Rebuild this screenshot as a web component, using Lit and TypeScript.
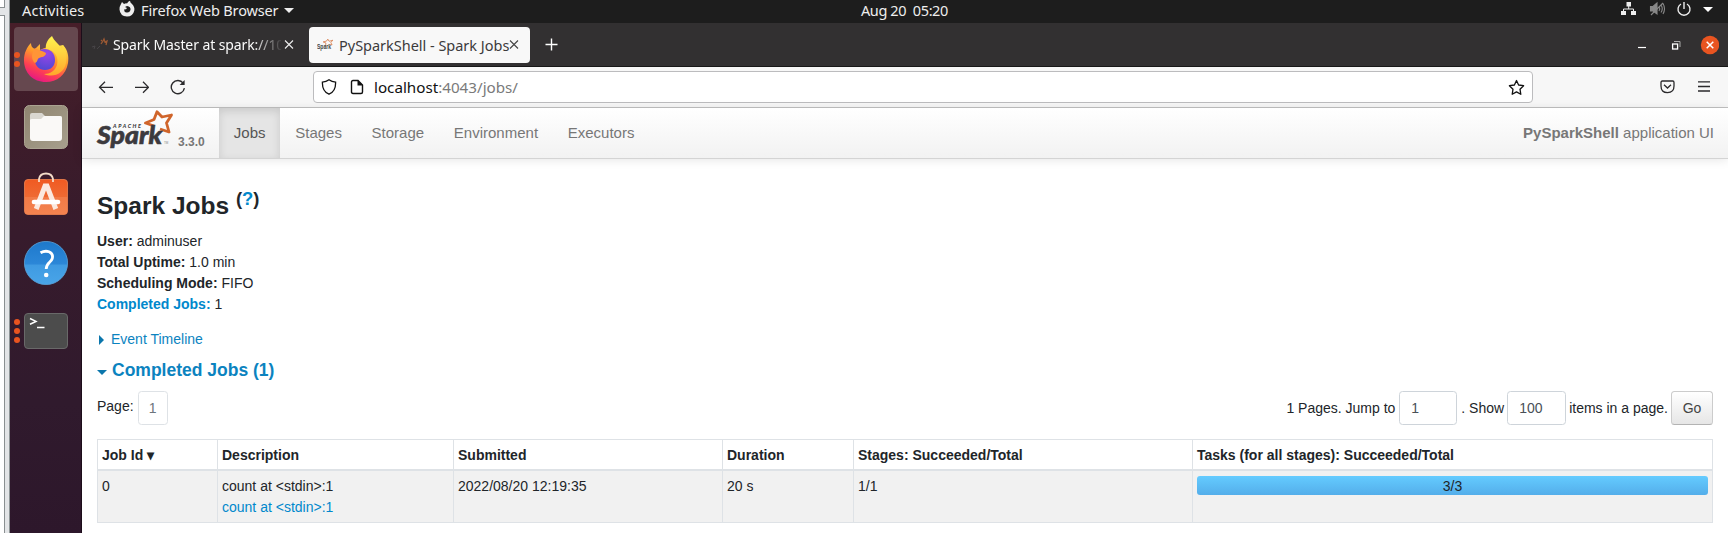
import { LitElement, html, css, svg } from "lit";
import { customElement } from "lit/decorators.js";

const star = svg`<path d="M40 34 L42 19 L29 14 L45 10 L51 1 L57 11 L74 6 L65 17 L71 28 L58 26" fill="none" stroke="#d0652b" stroke-width="3.2" stroke-linejoin="round"/>`;

@customElement("desktop-dock")
export class DesktopDock extends LitElement {
  static styles = css`
    :host { display: flex; flex-direction: column; align-items: center; gap: 3px; width: 72px; box-sizing: border-box; padding-top: 4px; flex: none; background: linear-gradient(#471e29 0, #3d1c2a 110px, #371b2c 210px, #301a2d 380px, #2d172b); border-right: 1px solid #1c0d1a; }
    .slot { display: flex; align-items: center; justify-content: center; width: 64px; height: 64px; border-radius: 4px; margin-bottom: 1px; position: relative; }
    .on { background: #66484f; }
    svg { display: block; }
    .dots { position: absolute; left: 0; top: 0; height: 64px; display: flex; flex-direction: column; justify-content: center; gap: 3px; }
    .dots i { width: 6px; height: 6px; border-radius: 50%; background: #e95420; }
  `;
  render() {
    return html`
      <div class="slot on"><div class="dots"><i></i><i></i></div>
        <svg width="46" height="48" viewBox="0 0 46 48">
          <defs>
            <linearGradient id="f" x1=".8" y1="0" x2=".3" y2="1"><stop offset="0" stop-color="#ffe14a"/><stop offset=".4" stop-color="#ff9a2b"/><stop offset=".72" stop-color="#ff4052"/><stop offset="1" stop-color="#e31587"/></linearGradient>
            <radialGradient id="g" cx=".6" cy=".2" r=".9"><stop offset="0" stop-color="#9a45e8"/><stop offset="1" stop-color="#4b48d0"/></radialGradient>
            <linearGradient id="y" x1="0" y1="0" x2="0" y2="1"><stop offset="0" stop-color="#fff44f"/><stop offset="1" stop-color="#ffa72b"/></linearGradient>
          </defs>
          <path d="M8 8 C8 11 9 13 12 14 L17 9 L17 15 C26 10 34 12 40 10 C45 15 46 22 45 28 C43 40 34 47 23 47 C10 47 1 38 1 25 C1 18 4 12 8 8Z" fill="url(#f)"/>
          <path d="M29 1 C25 4 22 9 23 14 C32 15 36 22 34 30 C32 36 27 39 21 39 C30 43 41 39 43 28 C44 22 44 16 40 10 L39 14 C36 9 31 6 29 1Z" fill="url(#y)"/>
          <path d="M17 15 C24 12 32 16 32 25 C32 31 28 35 22 35 C16 35 13 31 12 27Z" fill="url(#g)"/>
          <path d="M12 13 C15 15 18 15 23 18 C23 22 18 22 16 23 C14 24 15 27 12 28 C8 25 8 18 12 13Z" fill="#ff9537"/>
        </svg></div>
      <div class="slot"><svg width="44" height="44" viewBox="0 0 44 44">
        <defs><linearGradient id="fl" x1="0" y1="0" x2="1" y2="1"><stop offset="0" stop-color="#8f8570"/><stop offset="1" stop-color="#a79f8d"/></linearGradient></defs>
        <rect x=".5" y=".5" width="43" height="43" rx="5" fill="url(#fl)" stroke="#aaa391"/>
        <path d="M6 10 Q6 8 8 8 H18 L21 11 H36 Q38 11 38 13 V20 H6Z" fill="#d9d7d0"/>
        <path d="M6 15 Q6 14 8 14 H17 L20 11 H36 Q38 11 38 13 V33 Q38 36 35 36 H9 Q6 36 6 33Z" fill="#faf9f7"/>
      </svg></div>
      <div class="slot"><svg width="44" height="44" viewBox="0 6 44 44" overflow="visible">
        <defs><linearGradient id="sw" x1="0" y1="0" x2="0" y2="1"><stop offset="0" stop-color="#f05a22"/><stop offset=".5" stop-color="#ef6a33"/><stop offset=".51" stop-color="#f27a46"/><stop offset="1" stop-color="#f38350"/></linearGradient></defs>
        <rect x=".5" y="12.5" width="43" height="35" rx="3.5" fill="url(#sw)" stroke="#f0834f" stroke-width=".8"/>
        <path d="M15 15 V12 Q16 6.5 22 6.5 Q28 6.5 29 12 V15" fill="none" stroke="#f4ddc9" stroke-width="1.8"/>
        <path d="M12.2 42 L21 19 H23 L31.8 42" fill="none" stroke="#fbe9df" stroke-width="5"/>
        <path d="M10 35 H34" stroke="#fff" stroke-width="4.6" stroke-linecap="round"/>
      </svg></div>
      <div class="slot"><svg width="44" height="44" viewBox="0 0 44 44">
        <defs><linearGradient id="h" x1="0" y1="0" x2="0" y2="1"><stop offset="0" stop-color="#1e79cb"/><stop offset=".53" stop-color="#2c87d8"/><stop offset=".54" stop-color="#3f9ae2"/><stop offset="1" stop-color="#49a5e8"/></linearGradient></defs>
        <circle cx="22" cy="22" r="21.6" fill="url(#h)" stroke="#5ba5dc" stroke-width=".8"/>
        <path d="M16.5 11.8 Q21 9.3 25 10.8 Q29.5 13 28.3 17.5 C27 21.5 22.2 22 22.2 28" fill="none" stroke="#fff" stroke-width="2.8"/><circle cx="22.2" cy="34" r="2.3" fill="#fff"/>
      </svg></div>
      <div class="slot"><div class="dots"><i></i><i></i><i></i></div><svg width="44" height="36" viewBox="0 0 44 36">
        <rect x=".5" y=".5" width="43" height="35" rx="3.5" fill="#4c4c4c" stroke="#696969"/>
        <path d="M6 5.5 L12 8.4 L6 11.3 M13 14.5 H20.5" fill="none" stroke="#fff" stroke-width="1.5"/>
      </svg></div>`;
  }
}

@customElement("browser-chrome")
export class BrowserChrome extends LitElement {
  static styles = css`
    :host { display: block; font-family: "Noto Sans", "Open Sans", sans-serif; }
    svg { display: block; flex: none; }
    .tabs { display: flex; align-items: center; height: 44px; background: #323031; color: #fbfbfb; box-sizing: border-box; border-bottom: 1px solid #171717; padding-right: 9px; }
    .tab { display: flex; align-items: center; height: 36px; font-size: 14px; white-space: pre; box-sizing: border-box; border-radius: 4px; }
    .first { width: 227px; padding-left: 9px; }
    .first .label { width: 168px; margin-left: 5px; overflow: hidden; letter-spacing: -.1px; -webkit-mask-image: linear-gradient(90deg, #000 140px, transparent 170px); mask-image: linear-gradient(90deg, #000 140px, transparent 170px); }
    .active { width: 221px; background: #f8f8f8; color: #3c3b3c; padding-left: 8px; }
    .active .label { width: 170px; margin-left: 5px; font-size: 14.5px; letter-spacing: -.02px; }
    .plus { margin-left: 15px; }
    .grow { flex: 1; }
    .bar { display: flex; align-items: center; height: 41px; box-sizing: border-box; background: #f7f7f7; border-bottom: 1px solid #c1c1c1; padding: 0 18px 0 16px; color: #2b2a2c; }
    .nav { display: flex; gap: 21px; width: 215px; }
    .url { display: flex; align-items: center; width: 1220px; height: 32px; box-sizing: border-box; border: 1px solid #bcbcbe; border-radius: 4px; background: #fff; padding: 0 7px; font-size: 15.2px; color: #111; }
    .address { margin-left: 10px; flex: 1; }
    .address span { color: #7a7a7a; }
    .page { margin-left: 13px; }
    .win { display: flex; align-items: center; }
  `;
  render() {
    return html`
      <div class="tabs">
        <div class="tab first">
          <svg width="17" height="16" viewBox="0 0 17 16"><path d="M1 10 L4 9 L3 12 M6 12 L9 9" stroke="#484548" fill="none"/><path d="M10 7 L12 4 L13 2 L14 5 L16 4 L15 8 M11 3 L10 4" fill="none" stroke="#9c5933" stroke-width="1.3"/></svg>
          <span class="label">Spark Master at spark://10</span>
          <svg width="14" height="14" viewBox="0 0 14 14"><path d="M4 2.5 L12 10.5 M12 2.5 L4 10.5" stroke="#eee" stroke-width="1.1"/></svg>
        </div>
        <div class="tab active">
          <svg width="17" height="14" viewBox="0 0 80 57">
            ${star}<text x="0" y="47" font-family="Liberation Sans" font-weight="700" font-size="34" textLength="66" lengthAdjust="spacingAndGlyphs" fill="#444">Spark</text></svg>
          <span class="label">PySparkShell - Spark Jobs</span>
          <svg width="11" height="14" viewBox="0 0 11 14"><path d="M1 2.5 L9 10.5 M9 2.5 L1 10.5" stroke="#444" stroke-width="1.1"/></svg>
        </div>
        <svg class="plus" width="13" height="13" viewBox="0 0 13 13"><path d="M6.5 .5 V12.5 M.5 6.5 H12.5" stroke="#fff" stroke-width="1.4"/></svg>
        <div class="grow"></div>
        <div class="win"><svg width="90" height="20" viewBox="0 0 90 20">
          <path d="M9 12.5 H17" stroke="#fff" stroke-width="1.2"/>
          <rect x="43.6" y="9" width="5" height="5" fill="none" stroke="#fff" stroke-width="1.3"/><path d="M45 6.5 H51 V12" fill="none" stroke="#aaa" stroke-width="1"/>
          <circle cx="81" cy="10" r="9.2" fill="#e95420"/><path d="M77.7 6.7 L84.3 13.3 M84.3 6.7 L77.7 13.3" stroke="#fff" stroke-width="1.5"/>
        </svg></div>
      </div>
      <div class="bar">
        <div class="nav">
          <svg width="16" height="16" viewBox="0 0 16 16" fill="none" stroke="#2b2a2c" stroke-width="1.25"><path d="M15 8.3 H1.8 M7 2.8 L1.5 8.3 L7 13.8"/></svg>
          <svg width="14" height="16" viewBox="0 0 14 16" fill="none" stroke="#2b2a2c" stroke-width="1.25"><path d="M0 8.3 H13.2 M8 2.8 L13.5 8.3 L8 13.8"/></svg>
          <svg width="16" height="16" viewBox="0 0 16 16" fill="none" stroke="#2b2a2c" stroke-width="1.35"><path d="M13.2 4.2 A6.6 6.6 0 1 0 14.4 9.2"/><path d="M14.6 1 V6 H9.6Z" fill="#2b2a2c" stroke="none"/></svg>
        </div>
        <div class="url">
          <svg width="16" height="16" viewBox="0 0 16 16"><path d="M8 .8 C10 2.3 12 3 14.6 3.2 C14.8 9 13 13.2 8 15.2 C3 13.2 1.2 9 1.4 3.2 C4 3 6 2.3 8 .8Z" fill="none" stroke="#111" stroke-width="1.3"/></svg>
          <svg class="page" width="14" height="16" viewBox="0 0 14 16"><path d="M3 1.5 H8 L12.5 6 V13 Q12.5 14.5 11 14.5 H3 Q1.5 14.5 1.5 13 V3 Q1.5 1.5 3 1.5Z" fill="none" stroke="#111" stroke-width="1.4"/><path d="M7.5 1 V6.5 H13Z" fill="#111"/></svg>
          <div class="address">localhost<span>:4043/jobs/</span></div>
          <svg width="17" height="17" viewBox="0 0 17 17"><path d="M8.5 1.5 L10.6 6 L15.6 6.7 L12 10.2 L12.8 15.3 L8.5 12.9 L4.2 15.3 L5 10.2 L1.4 6.7 L6.4 6Z" fill="none" stroke="#111" stroke-width="1.3" stroke-linejoin="round"/></svg>
        </div>
        <div class="grow"></div>
        <svg width="50" height="16" viewBox="0 0 50 16" fill="none" stroke="#2b2a2c" stroke-width="1.3"><path d="M2.3 2 H12.7 Q14 2 14 3.5 V7 Q14 13.6 7.5 13.6 Q1 13.6 1 7 V3.5 Q1 2 2.3 2Z M4 5.8 L7.5 9 L11 5.8 M38 2.8 H50 M38 7.5 H50 M38 12 H50"/></svg>
      </div>`;
  }
}

@customElement("spark-page")
export class SparkPage extends LitElement {
  static styles = css`
    :host { display: block; flex: 1; background: #fff; color: #212529; font: 14px/21px "Liberation Sans", Arial, sans-serif; }
    .navbar { display: flex; height: 51px; box-sizing: border-box; background: linear-gradient(#fff, #f2f2f2); border-bottom: 1px solid #d4d4d4; box-shadow: 0 1px 10px rgba(0,0,0,.1); font-size: 15px; line-height: 45px; color: #777; padding-right: 14px; }
    .brand { display: flex; width: 137px; box-sizing: border-box; padding: 2px 0 0 14px; }
    .brand svg { display: block; }
    .version { font-weight: 700; font-size: 12px; line-height: 12px; margin: 26px 0 0 4px; }
    .item { padding: 2px 14.85px 0; }
    .current { background: #e5e5e5; box-shadow: inset 0 3px 8px rgba(0,0,0,.125); color: #555; }
    .app { margin-left: auto; padding-top: 2px; }
    .content { padding: 0 15px; }
    h3 { font-size: 24.5px; line-height: 29px; margin: 0; padding-top: 32px; height: 40px; box-sizing: content-box; }
    sup { font-size: 18.4px; line-height: 0; vertical-align: baseline; position: relative; top: -9px; }
    a { color: #0088cc; text-decoration: none; }
    .facts { list-style: none; margin: 0 0 14px; padding: 0; }
    .timeline { display: flex; align-items: center; gap: 7px; height: 21px; color: #0b83bf; padding-left: 2px; }
    .right { border-left: 5px solid #0b76ac; border-top: 5px solid transparent; border-bottom: 5px solid transparent; }
    .down { border-top: 5px solid #0b76ac; border-left: 5px solid transparent; border-right: 5px solid transparent; margin-top: 3px; }
    h4 { display: flex; align-items: center; gap: 5px; font-size: 17.5px; line-height: 21px; margin: 10px 0; color: #0b83bf; }
    .pager { display: flex; height: 48px; }
    .pager > span { white-space: pre; }
    .label { line-height: 31px; }
    .num { width: 30px; height: 34px; box-sizing: border-box; border: 1px solid #dee2e6; border-radius: 3.5px; text-align: center; line-height: 33px; color: #6c757d; margin-left: 4px; }
    .form { margin-left: auto; display: flex; line-height: 34px; white-space: pre; }
    .field { box-sizing: border-box; height: 34px; border: 1px solid #ced4da; border-radius: 3.5px; padding-left: 11px; line-height: 33px; color: #495057; }
    .jump { width: 58px; margin: 0 4px 0 4px; }
    .show { width: 59px; margin: 0 3px; }
    .go { width: 42px; height: 34px; box-sizing: border-box; border: 1px solid #ccc; border-bottom-color: #b3b3b3; border-radius: 3.5px; background: linear-gradient(#fff, #e6e6e6); text-align: center; line-height: 33px; color: #444; margin-left: 3px; }
    table { width: 1616px; table-layout: fixed; border-collapse: collapse; }
    th, td { border: 1px solid #dee2e6; padding: 5px 4px 4px; text-align: left; vertical-align: top; box-sizing: border-box; }
    th { border-bottom-width: 2px; padding-bottom: 3px; }
    td { background: #f1f1f1; }
    .id { width: 120px; } .desc { width: 236px; } .sub { width: 269px; } .dur { width: 131px; } .stages { width: 339px; }
    .progress { height: 19px; border-radius: 3px; background: linear-gradient(#64cbff, #54aeea); text-align: center; line-height: 20px; }
  `;
  render() {
    return html`
      <div class="navbar">
        <div class="brand">
          <svg width="78" height="42" viewBox="0 0 78 42"><g transform="translate(1 0)">
            <path d="M57 16 L48.5 13 L57 9.5 L60 1.8 L65 7 L74.5 5 L69.5 13 L72 22 L63 19" fill="none" stroke="#d0652b" stroke-width="2.8" stroke-linejoin="round"/>
            <text x="16" y="17.6" font-family="Lato" font-style="italic" font-weight="900" font-size="5.4" textLength="28" fill="#3c3a3e">APACHE</text>
            <text x="0" y="34" font-family="Lato" font-style="italic" font-weight="900" font-size="25.5" textLength="65" lengthAdjust="spacingAndGlyphs" fill="#3c3a3e" stroke="#3c3a3e" stroke-width=".6">Spark</text>
            <text x="67" y="34" font-family="Liberation Sans" font-size="3" fill="#888">TM</text></g>
          </svg>
          <span class="version">3.3.0</span>
        </div>
        <div class="item current">Jobs</div><div class="item">Stages</div><div class="item">Storage</div><div class="item">Environment</div><div class="item">Executors</div>
        <div class="app"><b>PySparkShell</b> application UI</div>
      </div>
      <div class="content">
        <h3>Spark Jobs <sup>(<a>?</a>)</sup></h3>
        <ul class="facts">
          <li><b>User:</b> adminuser</li><li><b>Total Uptime:</b> 1.0 min</li><li><b>Scheduling Mode:</b> FIFO</li><li><a><b>Completed Jobs:</b></a> 1</li>
        </ul>
        <div class="timeline"><i class="right"></i>Event Timeline</div>
        <h4><i class="down"></i>Completed Jobs (1)</h4>
        <div class="pager">
          <span class="label">Page:</span><div class="num">1</div>
          <div class="form"><span>1 Pages. Jump to</span><div class="field jump">1</div><span>. Show</span><div class="field show">100</div><span>items in a page.</span><div class="go">Go</div></div>
        </div>
        <table>
          <tr><th class="id">Job Id ▾</th><th class="desc">Description</th><th class="sub">Submitted</th><th class="dur">Duration</th><th class="stages">Stages: Succeeded/Total</th><th>Tasks (for all stages): Succeeded/Total</th></tr>
          <tr><td>0</td><td>count at &lt;stdin&gt;:1<br><a>count at &lt;stdin&gt;:1</a></td><td>2022/08/20 12:19:35</td><td>20 s</td><td>1/1</td><td><div class="progress">3/3</div></td></tr>
        </table>
      </div>`;
  }
}

@customElement("app-root")
export class AppRoot extends LitElement {
  static styles = css`
    :host { display: flex; height: 533px; overflow: hidden; background: #fff; }
    .edge { width: 10px; flex: none; display: flex; flex-direction: column; box-sizing: border-box; background: #e3e5e7; border-right: 1px solid #8d9496; }
    .edge i { width: 5px; box-sizing: border-box; background: #fff; border-right: 1px solid #8a8f91; }
    .edge .a { height: 8px; border-bottom: 1px solid #8a8f91; }
    .edge .b { flex: 1; margin-top: 7px; border-top: 1px solid #8a8f91; }
    .desktop { flex: 1; display: flex; flex-direction: column; min-width: 0; }
    .top { display: grid; grid-template-columns: 851px auto 1fr; height: 23px; background: #1d1d1d; color: #eee; font: 14.5px/20px "Noto Sans", "Open Sans", sans-serif; white-space: pre; }
    .left { display: flex; padding-left: 12px; }
    .activities { width: 97px; letter-spacing: .2px; }
    .app { margin-left: 6px; letter-spacing: -.15px; }
    .clock { letter-spacing: -.4px; }
    .caret { margin: 8px 0 0 6px; width: 0; height: 0; border-top: 5px solid #eee; border-left: 5px solid transparent; border-right: 5px solid transparent; }
    .tray { display: flex; justify-content: flex-end; padding-right: 14px; }
    .body { flex: 1; display: flex; min-height: 0; }
    .window { flex: 1; display: flex; flex-direction: column; min-width: 0; }
    svg { display: block; }
  `;
  render() {
    return html`
      <div class="edge"><i class="a"></i><i class="b"></i></div>
      <div class="desktop">
        <div class="top">
          <div class="left"><span class="activities">Activities</span>
            <svg width="16" height="18" viewBox="0 0 16 18"><path d="M2 4 L3 2 L5 4 Q7 3 8 3.5 Q9 1.5 11 .8 Q11 2.5 13 4 Q16 7 15.3 10.5 Q14 16.5 8 16.5 Q1 16 .5 9.5 Q.4 6.5 2 4Z" fill="#eee"/><path d="M8 6 Q12 6.5 11.5 10 Q10.5 13 7.5 12.5 Q5 12 5 9.5 Q7.5 9.5 8 8 L6 7Z" fill="#1d1d1d"/></svg>
            <span class="app">Firefox Web Browser</span><i class="caret"></i></div>
          <div class="clock">Aug 20  05:20</div>
          <div class="tray"><svg width="94" height="18" viewBox="0 0 94 18">
            <path d="M6.5 2 H11 V6.5 H6.5Z M1 11 H6 V15 H1Z M11 11 H16 V15 H11Z" fill="#eee"/><path d="M8.7 6 V9 M3.5 11 V9 H13.5 V11" fill="none" stroke="#eee"/>
            <g stroke="#888" fill="none" stroke-width="1.1"><path d="M30.5 6.5 H33 L37 3 V14 L33 11 H30.5Z" fill="#888"/><path d="M39 6.5 Q40.5 8.7 39 11 M41 5 Q43.5 8.7 41 12.5 M43 3.5 Q46 8.7 43 14 M31 15 L43 3"/></g>
            <path d="M61 4 A6 6 0 1 0 67 4 M64 2 V9" fill="none" stroke="#eee" stroke-width="1.4"/>
            <path d="M83 7 H93 L88 12Z" fill="#fff"/>
          </svg></div>
        </div>
        <div class="body">
          <desktop-dock></desktop-dock>
          <div class="window"><browser-chrome></browser-chrome><spark-page></spark-page></div>
        </div>
      </div>`;
  }
}
